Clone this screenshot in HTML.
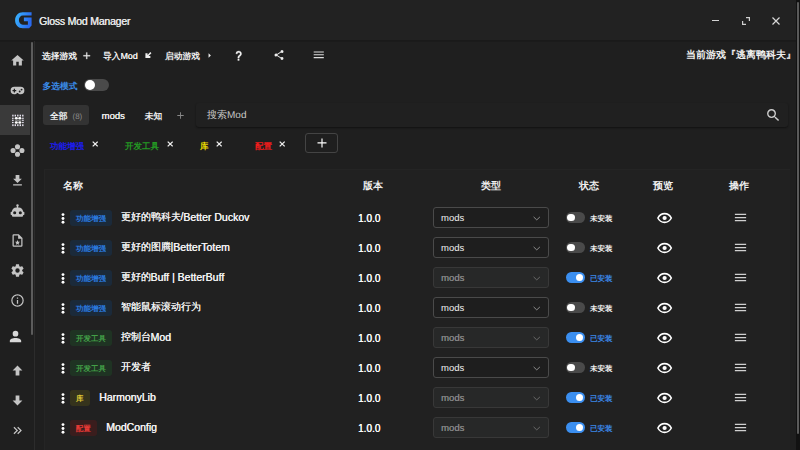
<!DOCTYPE html>
<html><head><meta charset="utf-8">
<style>
*{margin:0;padding:0;box-sizing:border-box}
html,body{width:800px;height:450px;overflow:hidden;background:#1f1f1f;font-family:"Liberation Sans",sans-serif;color:#f0f0f0}
.a{position:absolute;white-space:nowrap}
.ico{position:absolute}
.t{font-size:8.75px;line-height:12px;font-weight:600;text-rendering:geometricPrecision}
.lt{font-weight:500;text-shadow:0.3px 0 0 #f0f0f0}
.row{position:absolute;left:44px;width:746px;height:30px}
.row>*{position:absolute}
.dots{left:16.7px;top:9.7px}
.dots b{display:block;width:2.7px;height:2.7px;border-radius:50%;background:#fff;margin-bottom:1.1px}
.nm{left:26px;top:-0.2px;height:30px;display:flex;align-items:center;white-space:nowrap}
.chip{text-rendering:geometricPrecision;display:inline-block;height:16px;line-height:17.8px;text-align:center;border-radius:3px;font-size:7.5px;font-weight:600}
.c4{width:42px}.c1{width:19.5px}.c2{width:26.5px}
.chip.blue{background:#1b2a3a;color:#2a7ae0}
.chip.green{background:#1f3323;color:#43a047}
.chip.yellow{background:#35331c;color:#dcc534}
.chip.red{background:#3a1d1d;color:#e53935}
.l{font-size:10.5px;font-weight:500;position:relative;top:0.8px;text-shadow:0.3px 0 0 #f2f2f2}
.name{margin-left:8.5px;font-size:10px;line-height:12px;font-weight:500;text-shadow:0.25px 0 0 #f2f2f2;position:relative;top:-1.5px;color:#f2f2f2}
.ver{left:314px;top:9.7px;font-size:10px;line-height:12px;font-weight:500;color:#fff;text-shadow:0.3px 0 0 #fff}
.sel{left:389px;top:3.9px;width:116px;height:21px;border:1px solid #4a4a4a;border-radius:3px;background:#1e1e1e;color:#f0f0f0}
.sel span{position:absolute;left:7px;top:4px;font-size:9.5px;line-height:12px;font-weight:500}
.sel svg{position:absolute;left:99.1px;top:7.7px;color:#8c8c8c}
.sel.dis{background:#272828;border-color:#383838;color:#858585}
.sel.dis span{font-weight:400;text-shadow:0.2px 0 0 #858585}
.sel.dis svg{color:#6a6a6a}
.sw{left:522px;top:9.2px;width:18.5px;height:10.8px;border-radius:5.4px;background:#4a4a4a}
.sw::after{content:"";position:absolute;left:1.4px;top:1.6px;width:7.6px;height:7.6px;border-radius:50%;background:#fff}
.sw.on{background:#3b8ff0}
.sw.on::after{left:9.8px}
.st{text-rendering:geometricPrecision;left:546px;top:10.7px;font-size:7.5px;line-height:10px;font-weight:600;color:#f0f0f0}
.st.on{color:#3a86e8}
.hd{position:absolute;top:179.5px;font-size:9.5px;line-height:12px;font-weight:600;color:#f0f0f0}
</style></head><body>
<div class="a" style="left:0;top:0;width:800px;height:40px;background:#222"></div>
<div class="a" style="left:0;top:40px;width:800px;height:1px;background:#1a1a1a;box-shadow:0 1px 0 rgba(0,0,0,.12)"></div>
<svg class="ico" style="left:15px;top:12px" width="17" height="17" viewBox="0 0 17 17">
 <defs><linearGradient id="lg" x1="0" y1="0" x2="1" y2="0.3"><stop offset="0" stop-color="#3ab8ff"/><stop offset="1" stop-color="#2a6af0"/></linearGradient></defs>
 <path d="M16.6,0.2 L16.6,3.4 L7.8,3.4 C5.5,3.4 3.9,5.5 3.9,8.1 C3.9,10.7 5.5,12.7 7.8,12.7 L12.9,12.7 L12.9,9.2 L8.9,9.2 L8.9,5.4 L16.6,5.4 L16.6,13.6 L14.1,16.2 L7.8,16.2 C3.3,16.2 0.1,12.7 0.1,8.2 C0.1,3.7 3.3,0.2 7.8,0.2 Z" fill="url(#lg)"/>
</svg>
<div class="a" style="left:39px;top:14.5px;font-size:10.5px;line-height:13px;letter-spacing:-0.2px;font-weight:500;color:#e6e6e6;text-shadow:0.3px 0 0 #e6e6e6">Gloss Mod Manager</div>
<div class="a" style="left:712px;top:20px;width:7px;height:1px;background:#d4d4d4"></div>
<svg class="ico" style="left:742px;top:17px" width="8" height="8" viewBox="0 0 8 8"><path d="M0.6 4 V7.4 H4 M4 0.6 H7.4 V4" fill="none" stroke="#cfcfcf" stroke-width="1.2"/></svg>
<svg class="ico" style="left:772px;top:17px" width="8" height="8" viewBox="0 0 8 8"><path d="M0.5 0.5 L7.5 7.5 M7.5 0.5 L0.5 7.5" stroke="#d8d8d8" stroke-width="1.2"/></svg>

<div class="a" style="left:0;top:105px;width:30px;height:30px;background:#3a3a3a"></div>
<div class="a" style="left:31px;top:42px;width:2px;height:293px;background:#5c5c5c;border-radius:1px"></div>
<div class="a" style="left:34px;top:41px;width:1px;height:409px;background:#2c2c2c"></div>
<svg class="ico" style="left:9.80px;top:52.50px" width="15" height="15" viewBox="0 0 24 24"><path d="M10,20V14H14V20H19V12H22L12,3L2,12H5V20H10Z" fill="#c4c4c4"/></svg><svg class="ico" style="left:9.80px;top:82.50px" width="15" height="15" viewBox="0 0 24 24"><path d="M7,6H17A6,6 0 0,1 23,12A6,6 0 0,1 17,18C15.22,18 13.63,17.23 12.53,16H11.47C10.37,17.23 8.78,18 7,18A6,6 0 0,1 1,12A6,6 0 0,1 7,6M6,9V11H4V13H6V15H8V13H10V11H8V9H6M15.5,12A1.5,1.5 0 0,0 14,13.5A1.5,1.5 0 0,0 15.5,15A1.5,1.5 0 0,0 17,13.5A1.5,1.5 0 0,0 15.5,12M18.5,9A1.5,1.5 0 0,0 17,10.5A1.5,1.5 0 0,0 18.5,12A1.5,1.5 0 0,0 20,10.5A1.5,1.5 0 0,0 18.5,9Z" fill="#c4c4c4"/></svg><svg class="ico" style="left:9.80px;top:142.50px" width="15" height="15" viewBox="0 0 24 24"><path d="M12,1.9A4.1,4.1 0 1,1 12,10.1A4.1,4.1 0 1,1 12,1.9M4.9,7.9A4.1,4.1 0 1,1 4.9,16.1A4.1,4.1 0 1,1 4.9,7.9M19.1,7.9A4.1,4.1 0 1,1 19.1,16.1A4.1,4.1 0 1,1 19.1,7.9M12,13.9A4.1,4.1 0 1,1 12,22.1A4.1,4.1 0 1,1 12,13.9Z" fill="#c4c4c4"/></svg><svg class="ico" style="left:9.80px;top:172.50px" width="15" height="15" viewBox="0 0 24 24"><path d="M5,20H19V18H5M19,9H15V3H9V9H5L12,16L19,9Z" fill="#c4c4c4"/></svg><svg class="ico" style="left:9.80px;top:202.50px" width="15" height="15" viewBox="0 0 24 24"><path d="M12,2A2,2 0 0,1 14,4C14,4.74 13.6,5.39 13,5.73V7H14A7,7 0 0,1 21,14H22A1,1 0 0,1 23,15V18A1,1 0 0,1 22,19H21V20A2,2 0 0,1 19,22H5A2,2 0 0,1 3,20V19H2A1,1 0 0,1 1,18V15A1,1 0 0,1 2,14H3A7,7 0 0,1 10,7H11V5.73C10.4,5.39 10,4.74 10,4A2,2 0 0,1 12,2M7.5,13A2.5,2.5 0 0,0 5,15.5A2.5,2.5 0 0,0 7.5,18A2.5,2.5 0 0,0 10,15.5A2.5,2.5 0 0,0 7.5,13M16.5,13A2.5,2.5 0 0,0 14,15.5A2.5,2.5 0 0,0 16.5,18A2.5,2.5 0 0,0 19,15.5A2.5,2.5 0 0,0 16.5,13Z" fill="#c4c4c4"/></svg><svg class="ico" style="left:9.80px;top:232.50px" width="15" height="15" viewBox="0 0 24 24"><path d="M14,2H6A2,2 0 0,0 4,4V20A2,2 0 0,0 6,22H18A2,2 0 0,0 20,20V8L14,2M18,20H6V4H13V9H18V20M12,11.2L13.2,13.8L16,14.1L13.9,16L14.5,18.8L12,17.4L9.5,18.8L10.1,16L8,14.1L10.8,13.8Z" fill="#c4c4c4"/></svg><svg class="ico" style="left:9.80px;top:262.50px" width="15" height="15" viewBox="0 0 24 24"><path d="M12,15.5A3.5,3.5 0 0,1 8.5,12A3.5,3.5 0 0,1 12,8.5A3.5,3.5 0 0,1 15.5,12A3.5,3.5 0 0,1 12,15.5M19.43,12.97C19.47,12.65 19.5,12.33 19.5,12C19.5,11.67 19.47,11.34 19.43,11L21.54,9.37C21.73,9.22 21.78,8.95 21.66,8.73L19.66,5.27C19.54,5.05 19.27,4.96 19.05,5.05L16.56,6.05C16.04,5.66 15.5,5.32 14.87,5.07L14.5,2.42C14.46,2.18 14.25,2 14,2H10C9.75,2 9.54,2.180 9.5,2.42L9.13,5.07C8.5,5.32 7.96,5.66 7.44,6.05L4.95,5.05C4.73,4.96 4.46,5.05 4.34,5.27L2.34,8.73C2.21,8.95 2.27,9.22 2.46,9.37L4.57,11C4.53,11.34 4.5,11.67 4.5,12C4.5,12.33 4.53,12.65 4.57,12.97L2.46,14.63C2.27,14.78 2.21,15.05 2.34,15.27L4.34,18.73C4.46,18.95 4.73,19.03 4.95,18.95L7.44,17.94C7.96,18.34 8.5,18.68 9.13,18.93L9.5,21.58C9.54,21.820 9.75,22 10,22H14C14.25,22 14.46,21.82 14.5,21.58L14.87,18.93C15.5,18.67 16.04,18.34 16.56,17.94L19.05,18.95C19.27,19.03 19.54,18.95 19.66,18.73L21.66,15.27C21.78,15.05 21.73,14.78 21.54,14.63L19.43,12.97Z" fill="#c4c4c4"/></svg><svg class="ico" style="left:9.80px;top:292.50px" width="15" height="15" viewBox="0 0 24 24"><path d="M11,9H13V7H11M12,20C7.59,20 4,16.41 4,12C4,7.59 7.59,4 12,4C16.41,4 20,7.59 20,12C20,16.41 16.41,20 12,20M12,2A10,10 0 0,0 2,12A10,10 0 0,0 12,22A10,10 0 0,0 22,12A10,10 0 0,0 12,2M11,17H13V11H11V17Z" fill="#c4c4c4"/></svg><svg class="ico" style="left:11.5px;top:113.5px" width="13" height="13" viewBox="0 0 13 13"><rect x="0.20" y="0.70" width="1.4" height="1.8" fill="#e6e2ee"/><rect x="0.20" y="10.30" width="1.4" height="1.8" fill="#e6e2ee"/><rect x="2.60" y="0.70" width="1.4" height="1.8" fill="#e6e2ee"/><rect x="2.60" y="10.30" width="1.4" height="1.8" fill="#e6e2ee"/><rect x="5.10" y="0.70" width="1.4" height="1.8" fill="#e6e2ee"/><rect x="5.10" y="10.30" width="1.4" height="1.8" fill="#e6e2ee"/><rect x="7.60" y="0.70" width="1.4" height="1.8" fill="#e6e2ee"/><rect x="7.60" y="10.30" width="1.4" height="1.8" fill="#e6e2ee"/><rect x="10.10" y="0.70" width="1.4" height="1.8" fill="#e6e2ee"/><rect x="10.10" y="10.30" width="1.4" height="1.8" fill="#e6e2ee"/><rect x="0.00" y="3.70" width="1.6" height="1.2" fill="#e6e2ee"/><rect x="10.10" y="3.70" width="1.6" height="1.2" fill="#e6e2ee"/><rect x="0.00" y="5.70" width="1.6" height="1.2" fill="#e6e2ee"/><rect x="10.10" y="5.70" width="1.6" height="1.2" fill="#e6e2ee"/><rect x="0.00" y="7.90" width="1.6" height="1.2" fill="#e6e2ee"/><rect x="10.10" y="7.90" width="1.6" height="1.2" fill="#e6e2ee"/><ellipse cx="4.3" cy="4.3" rx="1.5" ry="1.3" fill="#fff"/><ellipse cx="4.3" cy="8.5" rx="1.5" ry="1.3" fill="#fff"/><ellipse cx="7.8" cy="4.3" rx="1.5" ry="1.3" fill="#fff"/><ellipse cx="7.8" cy="8.5" rx="1.5" ry="1.3" fill="#fff"/><rect x="3" y="5.8" width="6.4" height="1.1" fill="#aaa" opacity=".6"/></svg><svg class="ico" style="left:6.60px;top:328.30px" width="17" height="17" viewBox="0 0 24 24"><path d="M12,4A4,4 0 0,1 16,8A4,4 0 0,1 12,12A4,4 0 0,1 8,8A4,4 0 0,1 12,4M12,14C16.42,14 20,15.790 20,18V20H4V18C4,15.79 7.58,14 12,14Z" fill="#d8d8d8"/></svg><svg class="ico" style="left:10.00px;top:363.00px" width="15" height="15" viewBox="0 0 24 24"><path d="M15,20H9V12H4.16L12,4.16L19.84,12H15V20Z" fill="#c4c4c4"/></svg><svg class="ico" style="left:10.00px;top:392.50px" width="15" height="15" viewBox="0 0 24 24"><path d="M9,4H15V12H19.84L12,19.84L4.16,12H9V4Z" fill="#c4c4c4"/></svg><svg class="ico" style="left:10.20px;top:422.70px" width="15" height="15" viewBox="0 0 24 24"><path d="M5.59,7.41L7,6L13,12L7,18L5.59,16.59L10.17,12L5.59,7.41M11.59,7.41L13,6L19,12L13,18L11.59,16.59L16.17,12L11.59,7.41Z" fill="#c4c4c4"/></svg>

<div class="a" style="left:796px;top:0;width:4px;height:450px;background:#121212"></div>
<div class="a" style="left:797px;top:2px;width:2px;height:432px;background:#5a5a5a;border-radius:1px"></div>

<div class="a t" style="left:42px;top:49.5px">选择游戏</div>
<svg class="ico" style="left:81.25px;top:49.85px" width="11.5" height="11.5" viewBox="0 0 24 24" stroke="#f0f0f0" stroke-width="0.5"><path d="M19,13H13V19H11V13H5V11H11V5H13V11H19V13Z" fill="#f0f0f0"/></svg>
<div class="a t" style="left:103px;top:49.5px">导入<span class="lt">Mod</span></div>
<svg class="ico" style="left:143.95px;top:51.15px" width="8.5" height="8.5" viewBox="0 0 24 24"><path d="M21,6L18,3L10,11V6H4V20H18V14H13Z" fill="#eeeeee"/></svg>
<div class="a t" style="left:165px;top:49.5px">启动游戏</div>
<svg class="ico" style="left:203.70px;top:49.60px" width="11" height="11" viewBox="0 0 24 24"><path d="M10,17L15,12L10,7V17Z" fill="#eeeeee"/></svg>
<svg class="ico" style="left:233.25px;top:49.55px" width="11.5" height="11.5" viewBox="0 0 24 24" stroke="#f4f4f4" stroke-width="0.6"><path d="M10,19H13V22H10V19M12,2C17.35,2.22 19.68,7.62 16.5,11.67C15.67,12.67 14.33,13.33 13.67,14.17C13,15 13,16 13,17H10C10,15.33 10,13.92 10.67,12.92C11.33,11.92 12.67,11.33 13.5,10.67C15.92,8.43 15.32,5.26 12,5A3,3 0 0,0 9,8H6A6,6 0 0,1 12,2Z" fill="#f4f4f4"/></svg>
<svg class="ico" style="left:273.40px;top:49.00px" width="12" height="12" viewBox="0 0 24 24"><path d="M18,16.08C17.24,16.08 16.56,16.38 16.04,16.85L8.91,12.7C8.96,12.47 9,12.24 9,12C9,11.76 8.96,11.53 8.91,11.3L15.96,7.19C16.5,7.69 17.21,8 18,8A3,3 0 0,0 21,5A3,3 0 0,0 18,2A3,3 0 0,0 15,5C15,5.24 15.04,5.47 15.09,5.7L8.04,9.81C7.5,9.31 6.79,9 6,9A3,3 0 0,0 3,12A3,3 0 0,0 6,15C6.79,15 7.5,14.69 8.04,14.19L15.16,18.34C15.11,18.55 15.08,18.77 15.08,19C15.08,20.61 16.39,21.91 18,21.91C19.61,21.91 20.92,20.61 20.92,19A2.92,2.92 0 0,0 18,16.08Z" fill="#eeeeee"/></svg>
<svg class="ico" style="left:312.25px;top:48.45px" width="13.5" height="13.5" viewBox="0 0 24 24"><path d="M3,6H21V8H3V6M3,11H21V13H3V11M3,16H21V18H3V16Z" fill="#dddddd"/></svg>
<div class="a t" style="left:686px;top:49.7px;font-size:10px">当前游戏『逃离鸭科夫』</div>

<div class="a t" style="left:42.5px;top:79.5px;font-weight:600;color:#3a8ae8">多选模式</div>
<div class="a" style="left:84px;top:78.8px;width:25px;height:12.4px;border-radius:6.2px;background:#4a4a4a"></div>
<div class="a" style="left:84.8px;top:80px;width:10.3px;height:10.2px;border-radius:50%;background:#fff"></div>

<div class="a" style="left:43px;top:105px;width:46px;height:20px;border-radius:3px;background:#333"></div>
<div class="a t" style="left:50px;top:110px">全部<span style="color:#8a8a8a;font-size:8px;font-weight:400;margin-left:5px">(8)</span></div>
<div class="a t" style="left:101.5px;top:110px"><span style="font-size:9.5px;font-weight:400;color:#ececec;text-shadow:0.25px 0 0 #ececec">mods</span></div>
<div class="a t" style="left:144.8px;top:110px">未知</div>
<svg class="ico" style="left:174.50px;top:109.50px" width="11" height="11" viewBox="0 0 24 24"><path d="M19,13H13V19H11V13H5V11H11V5H13V11H19V13Z" fill="#888888"/></svg>
<div class="a" style="left:196px;top:103px;width:592px;height:24px;border-radius:3px;background:#202020;box-shadow:0 1px 2px rgba(0,0,0,.45)"></div>
<div class="a t" style="left:207px;top:110px;font-size:10px;font-weight:500;color:#c8c8c8">搜索Mod</div>
<svg class="ico" style="left:765.05px;top:106.95px" width="16.5" height="16.5" viewBox="0 0 24 24"><path d="M9.5,3A6.5,6.5 0 0,1 16,9.5C16,11.11 15.41,12.59 14.44,13.73L14.71,14H15.5L20.5,19L19,20.5L14,15.5V14.71L13.73,14.44C12.59,15.41 11.11,16 9.5,16A6.5,6.5 0 0,1 3,9.5A6.5,6.5 0 0,1 9.5,3M9.5,5C7,5 5,7 5,9.5C5,12 7,14 9.5,14C12,14 14,12 14,9.5C14,7 12,5 9.5,5Z" fill="#cccccc"/></svg>

<div class="a t" style="left:50px;top:140px;font-size:8.5px;text-rendering:geometricPrecision;font-weight:600;color:#1c1cf0">功能增强</div>
<svg class="ico" style="left:91.8px;top:141.4px" width="6.4" height="6" viewBox="0 0 6.4 6"><path d="M0.7 0.6 L5.7 5.4 M5.7 0.6 L0.7 5.4" stroke="#f0f0f0" stroke-width="1.3"/></svg>
<div class="a t" style="left:125px;top:140px;font-size:8.5px;text-rendering:geometricPrecision;font-weight:600;color:#239a23">开发工具</div>
<svg class="ico" style="left:166.6px;top:141.4px" width="6.4" height="6" viewBox="0 0 6.4 6"><path d="M0.7 0.6 L5.7 5.4 M5.7 0.6 L0.7 5.4" stroke="#f0f0f0" stroke-width="1.3"/></svg>
<div class="a t" style="left:200px;top:140px;font-size:8.5px;text-rendering:geometricPrecision;font-weight:600;color:#e8d800">库</div>
<svg class="ico" style="left:215.6px;top:141.4px" width="6.4" height="6" viewBox="0 0 6.4 6"><path d="M0.7 0.6 L5.7 5.4 M5.7 0.6 L0.7 5.4" stroke="#f0f0f0" stroke-width="1.3"/></svg>
<div class="a t" style="left:255px;top:140px;font-size:8.5px;text-rendering:geometricPrecision;font-weight:600;color:#f01c1c">配置</div>
<svg class="ico" style="left:279.3px;top:141.4px" width="6.4" height="6" viewBox="0 0 6.4 6"><path d="M0.7 0.6 L5.7 5.4 M5.7 0.6 L0.7 5.4" stroke="#f0f0f0" stroke-width="1.3"/></svg>
<div class="a" style="left:305px;top:133px;width:33px;height:20px;border:1px solid #444;border-radius:3px"></div>
<svg class="ico" style="left:316.6px;top:137.8px" width="10" height="10" viewBox="0 0 10 10"><path d="M0.5 4.9 H9.5 M5 0.5 V9.4" stroke="#fff" stroke-width="1.15"/></svg>

<div class="a" style="left:44px;top:169px;width:746px;height:281px;background:#212121;border-left:1px solid #252525;border-top:1px solid #242424"></div>
<div class="hd" style="left:62.5px">名称</div>
<div class="hd" style="left:363px">版本</div>
<div class="hd" style="left:480.5px">类型</div>
<div class="hd" style="left:578.5px">状态</div>
<div class="hd" style="left:653px">预览</div>
<div class="hd" style="left:728.5px">操作</div>
<div class="row" style="top:203px">
<svg class="dots" width="4" height="12" viewBox="0 0 4 12"><circle cx="2" cy="1.6" r="1.45" fill="#fff"/><circle cx="2" cy="5.45" r="1.45" fill="#fff"/><circle cx="2" cy="9.3" r="1.45" fill="#fff"/></svg>
<span class="nm"><span class="chip blue c4">功能增强</span><span class="name">更好的鸭科夫/<span class="l">Better Duckov</span></span></span>
<span class="ver">1.0.0</span>
<span class="sel"><span>mods</span><svg width="7.5" height="5" viewBox="0 0 7.5 5"><path d="M0.6 0.9 L3.75 3.9 L6.9 0.9" fill="none" stroke="currentColor" stroke-width="1"/></svg></span>
<span class="sw"></span><span class="st">未安装</span>
</div>
<svg class="ico" style="left:656px;top:212.1px" width="17" height="12" viewBox="0 0 17 12"><path d="M1.9,6 C3.5,2.7 5.9,1.65 8.6,1.65 C11.3,1.65 13.7,2.7 15.3,6 C13.7,9.3 11.3,10.35 8.6,10.35 C5.9,10.35 3.5,9.3 1.9,6Z" fill="none" stroke="#fff" stroke-width="1.6"/><circle cx="8.6" cy="6" r="2.1" fill="#fff"/></svg>
<svg class="ico" style="left:732.70px;top:210.00px" width="15" height="15" viewBox="0 0 24 24"><path d="M3,6H21V8H3V6M3,11H21V13H3V11M3,16H21V18H3V16Z" fill="#d0d0d0"/></svg>
<div class="row" style="top:233px">
<svg class="dots" width="4" height="12" viewBox="0 0 4 12"><circle cx="2" cy="1.6" r="1.45" fill="#fff"/><circle cx="2" cy="5.45" r="1.45" fill="#fff"/><circle cx="2" cy="9.3" r="1.45" fill="#fff"/></svg>
<span class="nm"><span class="chip blue c4">功能增强</span><span class="name">更好的图腾|<span class="l">BetterTotem</span></span></span>
<span class="ver">1.0.0</span>
<span class="sel"><span>mods</span><svg width="7.5" height="5" viewBox="0 0 7.5 5"><path d="M0.6 0.9 L3.75 3.9 L6.9 0.9" fill="none" stroke="currentColor" stroke-width="1"/></svg></span>
<span class="sw"></span><span class="st">未安装</span>
</div>
<svg class="ico" style="left:656px;top:242.1px" width="17" height="12" viewBox="0 0 17 12"><path d="M1.9,6 C3.5,2.7 5.9,1.65 8.6,1.65 C11.3,1.65 13.7,2.7 15.3,6 C13.7,9.3 11.3,10.35 8.6,10.35 C5.9,10.35 3.5,9.3 1.9,6Z" fill="none" stroke="#fff" stroke-width="1.6"/><circle cx="8.6" cy="6" r="2.1" fill="#fff"/></svg>
<svg class="ico" style="left:732.70px;top:240.00px" width="15" height="15" viewBox="0 0 24 24"><path d="M3,6H21V8H3V6M3,11H21V13H3V11M3,16H21V18H3V16Z" fill="#d0d0d0"/></svg>
<div class="row" style="top:263px">
<svg class="dots" width="4" height="12" viewBox="0 0 4 12"><circle cx="2" cy="1.6" r="1.45" fill="#fff"/><circle cx="2" cy="5.45" r="1.45" fill="#fff"/><circle cx="2" cy="9.3" r="1.45" fill="#fff"/></svg>
<span class="nm"><span class="chip blue c4">功能增强</span><span class="name">更好的<span class="l">Buff | BetterBuff</span></span></span>
<span class="ver">1.0.0</span>
<span class="sel dis"><span>mods</span><svg width="7.5" height="5" viewBox="0 0 7.5 5"><path d="M0.6 0.9 L3.75 3.9 L6.9 0.9" fill="none" stroke="currentColor" stroke-width="1"/></svg></span>
<span class="sw on"></span><span class="st on">已安装</span>
</div>
<svg class="ico" style="left:656px;top:272.1px" width="17" height="12" viewBox="0 0 17 12"><path d="M1.9,6 C3.5,2.7 5.9,1.65 8.6,1.65 C11.3,1.65 13.7,2.7 15.3,6 C13.7,9.3 11.3,10.35 8.6,10.35 C5.9,10.35 3.5,9.3 1.9,6Z" fill="none" stroke="#fff" stroke-width="1.6"/><circle cx="8.6" cy="6" r="2.1" fill="#fff"/></svg>
<svg class="ico" style="left:732.70px;top:270.00px" width="15" height="15" viewBox="0 0 24 24"><path d="M3,6H21V8H3V6M3,11H21V13H3V11M3,16H21V18H3V16Z" fill="#d0d0d0"/></svg>
<div class="row" style="top:293px">
<svg class="dots" width="4" height="12" viewBox="0 0 4 12"><circle cx="2" cy="1.6" r="1.45" fill="#fff"/><circle cx="2" cy="5.45" r="1.45" fill="#fff"/><circle cx="2" cy="9.3" r="1.45" fill="#fff"/></svg>
<span class="nm"><span class="chip blue c4">功能增强</span><span class="name" style="top:-0.6px">智能鼠标滚动行为</span></span>
<span class="ver">1.0.0</span>
<span class="sel"><span>mods</span><svg width="7.5" height="5" viewBox="0 0 7.5 5"><path d="M0.6 0.9 L3.75 3.9 L6.9 0.9" fill="none" stroke="currentColor" stroke-width="1"/></svg></span>
<span class="sw"></span><span class="st">未安装</span>
</div>
<svg class="ico" style="left:656px;top:302.1px" width="17" height="12" viewBox="0 0 17 12"><path d="M1.9,6 C3.5,2.7 5.9,1.65 8.6,1.65 C11.3,1.65 13.7,2.7 15.3,6 C13.7,9.3 11.3,10.35 8.6,10.35 C5.9,10.35 3.5,9.3 1.9,6Z" fill="none" stroke="#fff" stroke-width="1.6"/><circle cx="8.6" cy="6" r="2.1" fill="#fff"/></svg>
<svg class="ico" style="left:732.70px;top:300.00px" width="15" height="15" viewBox="0 0 24 24"><path d="M3,6H21V8H3V6M3,11H21V13H3V11M3,16H21V18H3V16Z" fill="#d0d0d0"/></svg>
<div class="row" style="top:323px">
<svg class="dots" width="4" height="12" viewBox="0 0 4 12"><circle cx="2" cy="1.6" r="1.45" fill="#fff"/><circle cx="2" cy="5.45" r="1.45" fill="#fff"/><circle cx="2" cy="9.3" r="1.45" fill="#fff"/></svg>
<span class="nm"><span class="chip green c4">开发工具</span><span class="name">控制台<span class="l">Mod</span></span></span>
<span class="ver">1.0.0</span>
<span class="sel dis"><span>mods</span><svg width="7.5" height="5" viewBox="0 0 7.5 5"><path d="M0.6 0.9 L3.75 3.9 L6.9 0.9" fill="none" stroke="currentColor" stroke-width="1"/></svg></span>
<span class="sw on"></span><span class="st on">已安装</span>
</div>
<svg class="ico" style="left:656px;top:332.1px" width="17" height="12" viewBox="0 0 17 12"><path d="M1.9,6 C3.5,2.7 5.9,1.65 8.6,1.65 C11.3,1.65 13.7,2.7 15.3,6 C13.7,9.3 11.3,10.35 8.6,10.35 C5.9,10.35 3.5,9.3 1.9,6Z" fill="none" stroke="#fff" stroke-width="1.6"/><circle cx="8.6" cy="6" r="2.1" fill="#fff"/></svg>
<svg class="ico" style="left:732.70px;top:330.00px" width="15" height="15" viewBox="0 0 24 24"><path d="M3,6H21V8H3V6M3,11H21V13H3V11M3,16H21V18H3V16Z" fill="#d0d0d0"/></svg>
<div class="row" style="top:353px">
<svg class="dots" width="4" height="12" viewBox="0 0 4 12"><circle cx="2" cy="1.6" r="1.45" fill="#fff"/><circle cx="2" cy="5.45" r="1.45" fill="#fff"/><circle cx="2" cy="9.3" r="1.45" fill="#fff"/></svg>
<span class="nm"><span class="chip green c4">开发工具</span><span class="name" style="top:-0.6px">开发者</span></span>
<span class="ver">1.0.0</span>
<span class="sel"><span>mods</span><svg width="7.5" height="5" viewBox="0 0 7.5 5"><path d="M0.6 0.9 L3.75 3.9 L6.9 0.9" fill="none" stroke="currentColor" stroke-width="1"/></svg></span>
<span class="sw"></span><span class="st">未安装</span>
</div>
<svg class="ico" style="left:656px;top:362.1px" width="17" height="12" viewBox="0 0 17 12"><path d="M1.9,6 C3.5,2.7 5.9,1.65 8.6,1.65 C11.3,1.65 13.7,2.7 15.3,6 C13.7,9.3 11.3,10.35 8.6,10.35 C5.9,10.35 3.5,9.3 1.9,6Z" fill="none" stroke="#fff" stroke-width="1.6"/><circle cx="8.6" cy="6" r="2.1" fill="#fff"/></svg>
<svg class="ico" style="left:732.70px;top:360.00px" width="15" height="15" viewBox="0 0 24 24"><path d="M3,6H21V8H3V6M3,11H21V13H3V11M3,16H21V18H3V16Z" fill="#d0d0d0"/></svg>
<div class="row" style="top:383px">
<svg class="dots" width="4" height="12" viewBox="0 0 4 12"><circle cx="2" cy="1.6" r="1.45" fill="#fff"/><circle cx="2" cy="5.45" r="1.45" fill="#fff"/><circle cx="2" cy="9.3" r="1.45" fill="#fff"/></svg>
<span class="nm"><span class="chip yellow c1">库</span><span class="name" style="margin-left:9.6px"><span class="l">HarmonyLib</span></span></span>
<span class="ver">1.0.0</span>
<span class="sel dis"><span>mods</span><svg width="7.5" height="5" viewBox="0 0 7.5 5"><path d="M0.6 0.9 L3.75 3.9 L6.9 0.9" fill="none" stroke="currentColor" stroke-width="1"/></svg></span>
<span class="sw on"></span><span class="st on">已安装</span>
</div>
<svg class="ico" style="left:656px;top:392.1px" width="17" height="12" viewBox="0 0 17 12"><path d="M1.9,6 C3.5,2.7 5.9,1.65 8.6,1.65 C11.3,1.65 13.7,2.7 15.3,6 C13.7,9.3 11.3,10.35 8.6,10.35 C5.9,10.35 3.5,9.3 1.9,6Z" fill="none" stroke="#fff" stroke-width="1.6"/><circle cx="8.6" cy="6" r="2.1" fill="#fff"/></svg>
<svg class="ico" style="left:732.70px;top:390.00px" width="15" height="15" viewBox="0 0 24 24"><path d="M3,6H21V8H3V6M3,11H21V13H3V11M3,16H21V18H3V16Z" fill="#d0d0d0"/></svg>
<div class="row" style="top:413px">
<svg class="dots" width="4" height="12" viewBox="0 0 4 12"><circle cx="2" cy="1.6" r="1.45" fill="#fff"/><circle cx="2" cy="5.45" r="1.45" fill="#fff"/><circle cx="2" cy="9.3" r="1.45" fill="#fff"/></svg>
<span class="nm"><span class="chip red c2">配置</span><span class="name" style="margin-left:9.6px"><span class="l">ModConfig</span></span></span>
<span class="ver">1.0.0</span>
<span class="sel dis"><span>mods</span><svg width="7.5" height="5" viewBox="0 0 7.5 5"><path d="M0.6 0.9 L3.75 3.9 L6.9 0.9" fill="none" stroke="currentColor" stroke-width="1"/></svg></span>
<span class="sw on"></span><span class="st on">已安装</span>
</div>
<svg class="ico" style="left:656px;top:422.1px" width="17" height="12" viewBox="0 0 17 12"><path d="M1.9,6 C3.5,2.7 5.9,1.65 8.6,1.65 C11.3,1.65 13.7,2.7 15.3,6 C13.7,9.3 11.3,10.35 8.6,10.35 C5.9,10.35 3.5,9.3 1.9,6Z" fill="none" stroke="#fff" stroke-width="1.6"/><circle cx="8.6" cy="6" r="2.1" fill="#fff"/></svg>
<svg class="ico" style="left:732.70px;top:420.00px" width="15" height="15" viewBox="0 0 24 24"><path d="M3,6H21V8H3V6M3,11H21V13H3V11M3,16H21V18H3V16Z" fill="#d0d0d0"/></svg>
</body></html>
